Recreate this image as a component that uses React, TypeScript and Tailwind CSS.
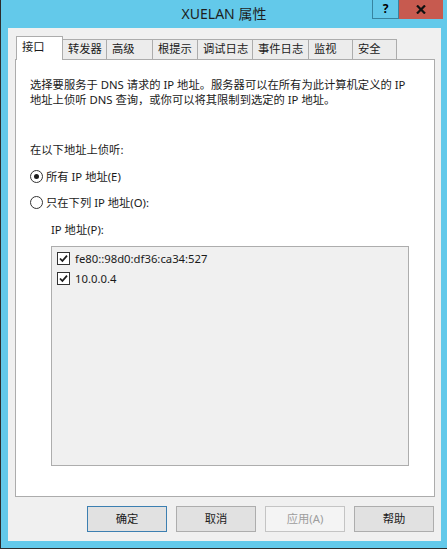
const tabs: [string, number][] = [
  ['接口', 47],
  ['转发器', 43],
  ['高级', 46],
  ['根提示', 45],
  ['调试日志', 55],
  ['事件日志', 56],
  ['监视', 44],
  ['安全', 45],
];

const addresses = ['fe80::98d0:df36:ca34:527', '10.0.0.4'];

function Radio({ checked }: { checked?: boolean }) {
  return (
    <span className="flex h-[13px] w-[13px] items-center justify-center rounded-full border border-[#333] bg-white">
      {checked && <span className="h-[5px] w-[5px] rounded-full bg-[#1c1c1c]" />}
    </span>
  );
}

function Check() {
  return (
    <span className="flex h-[13px] w-[13px] items-center justify-center border border-[#333] bg-white">
      <svg width="9" height="9" viewBox="0 0 9 9">
        <path d="M1 4.5 L3.4 7 L8 1.6" fill="none" stroke="#1c1c1c" strokeWidth="1.8" />
      </svg>
    </span>
  );
}

export default function App() {
  return (
    <div className="flex h-[549px] w-[447px] flex-col border-b border-l border-[#2c2c2c] bg-[#63c9ea] font-['Noto_Sans','Noto_Sans_CJK_SC',sans-serif] text-[11.3px] text-[#1a1a1a]">
      <div className="relative flex h-[28px] shrink-0 items-center justify-center">
        <span className="pb-[1px] text-[14px] text-[#1e1e1e]">XUELAN 属性</span>
        <div className="absolute right-[4px] top-0 flex h-[19px]">
          <span className="flex w-[27px] items-center justify-center border border-t-0 border-[#3784a0] text-[12px] font-bold text-black">
            ?
          </span>
          <span className="flex w-[44px] items-center justify-center bg-[#c75a4f]">
            <svg width="10" height="9" viewBox="0 0 10 9">
              <path d="M1 0.5 L9 8.5 M9 0.5 L1 8.5" stroke="#111" strokeWidth="2.2" />
            </svg>
          </span>
        </div>
      </div>

      <div className="mb-[7px] ml-[7px] mr-[6px] flex flex-1 flex-col bg-[#f0f0f0] px-[7px] pt-[8px] pr-[6px]">
        <div className="flex h-[23px] items-end pl-px">
          {tabs.map(([label, w], i) =>
            i === 0 ? (
              <div
                key={label}
                style={{ width: w }}
                className="relative z-10 -mb-px flex h-[24px] items-center border-l border-r border-t border-[#acacac] bg-white pb-[3px] pl-[5px]"
              >
                {label}
              </div>
            ) : (
              <div
                key={label}
                style={{ width: w }}
                className={`flex h-[20px] items-center border-t border-[#acacac] bg-[#ececec] pl-[5px] ${
                  i === 1 ? '' : 'border-l'
                } ${i === tabs.length - 1 ? 'border-r' : ''}`}
              >
                {label}
              </div>
            ),
          )}
        </div>

        <div className="flex h-[438px] flex-col border border-[#acacac] bg-white pl-[14px] pt-[17px] leading-[15px]">
          <p>
            选择要服务于 DNS 请求的 IP 地址。服务器可以在所有为此计算机定义的 IP
            <br />
            地址上侦听 DNS 查询，或你可以将其限制到选定的 IP 地址。
          </p>
          <p className="mt-[35px]">在以下地址上侦听:</p>
          <div className="mt-[12px] flex h-[15px] items-center gap-[3px]">
            <Radio checked />
            <span>所有 IP 地址(E)</span>
          </div>
          <div className="mt-[11px] flex h-[15px] items-center gap-[3px]">
            <Radio />
            <span>只在下列 IP 地址(O):</span>
          </div>
          <p className="ml-[21px] mt-[12px]">IP 地址(P):</p>
          <div className="ml-[21px] mt-[9px] h-[220px] w-[358px] border border-[#adadad] bg-[#f0f0f0] pl-[5px] pt-px">
            {addresses.map((a) => (
              <div key={a} className="flex h-[20px] items-center gap-[5px]">
                <Check />
                <span>{a}</span>
              </div>
            ))}
          </div>
        </div>

        <div className="mt-[9px] flex justify-end gap-[9px] pr-px">
          <button className="h-[26px] w-[80px] border border-[#3c7fb1] bg-[#e1e1e1]">确定</button>
          <button className="h-[26px] w-[80px] border border-[#adadad] bg-[#e1e1e1]">取消</button>
          <button className="h-[26px] w-[80px] border border-[#c4c4c4] bg-[#f4f4f4] text-[#9d9d9d]">应用(A)</button>
          <button className="h-[26px] w-[80px] border border-[#adadad] bg-[#e1e1e1]">帮助</button>
        </div>
      </div>
    </div>
  );
}
